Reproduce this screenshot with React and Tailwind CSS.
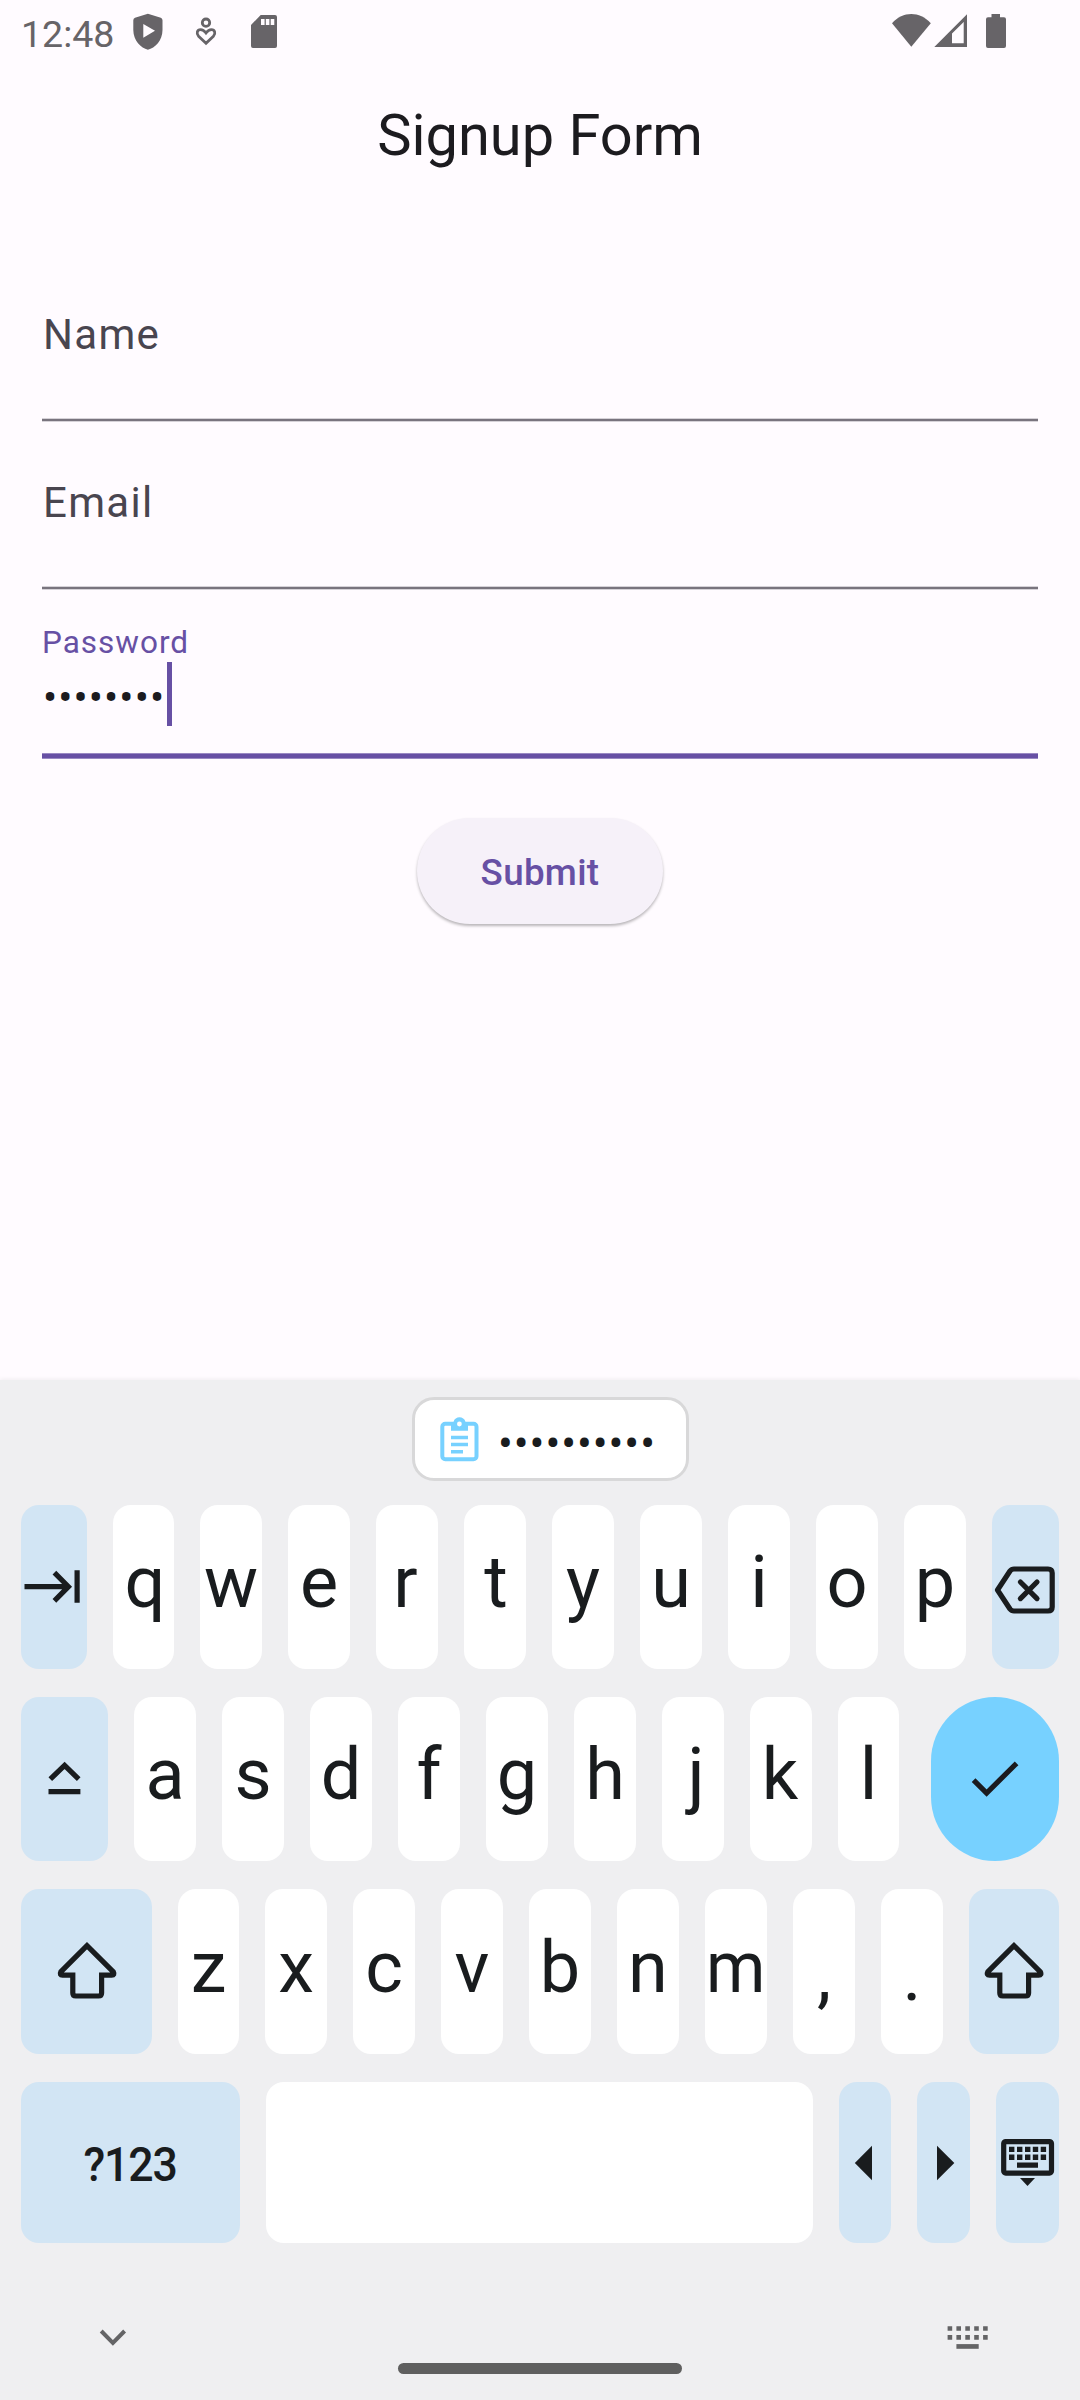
const INK = "#191c1e";

function Icon({ box, className = "", children, fill = "none", stroke = INK, sw = 5.2, ...rest }) {
  const [, , w, h] = box.split(" ").map(Number);
  return (
    <svg className={"block shrink-0 " + className} width={w} height={h} viewBox={box} fill={fill} stroke={stroke} strokeWidth={sw} {...rest}>
      {children}
    </svg>
  );
}

function StatusBar() {
  return (
    <div className="flex h-[64px] shrink-0 items-start text-[#676468]">
      <span className="ml-[21px] mt-[14px] w-[109px] text-[37.5px] leading-[40px] whitespace-nowrap">12:48</span>
      <Icon box="130 0 36 64" fill="currentColor" stroke="none">
        <path fillRule="evenodd" d="M147.9 13.7 L160.8 17.8 Q162.5 18.4 162.5 20.2 V30 C162.5 40.5 155 48 147.9 49.8 C141 48 133.3 40.5 133.3 30 V20.2 Q133.3 18.4 135 17.8 Z M143.3 24 V37.8 L155 30.8 Z" />
      </Icon>
      <Icon box="166 0 70 64" stroke="currentColor" sw={2.8}>
        <circle cx="206" cy="22.7" r="3.7" />
        <path d="M206 43.2 L198.6 36.2 C196 33.4 197.2 29.7 200.6 29.7 C203.2 29.7 204.5 31 206 33 C207.5 31 208.8 29.7 211.4 29.7 C214.8 29.7 216 33.4 213.4 36.2 Z" />
      </Icon>
      <Icon box="236 0 50 64" fill="currentColor" stroke="none">
        <path fillRule="evenodd" d="M260.7 15 H275 Q277 15 277 17 V46 Q277 48 275 48 H253 Q251 48 251 46 V25 Z M261 19 V25 H264.6 V19 Z M265.8 19 V25 H269.4 V19 Z M270.7 19 V25 H274.3 V19 Z" />
      </Icon>
      <Icon box="886 0 130 64" className="ml-auto mr-[64px]" fill="currentColor" stroke="none">
        <path d="M911.3 46.7 L892 23.2 C903 11 919.5 11 930.8 23.2 Z" />
        <path fillRule="evenodd" d="M967 14.3 V47 H934.3 Z M963.7 22 L952 33.5 V43.3 H963.7 Z" />
        <path d="M991.5 14 H1000 V17.3 H1004 Q1006 17.3 1006 19.3 V46 Q1006 48 1004 48 H988 Q986 48 986 46 V19.3 Q986 17.3 988 17.3 H991.5 Z" />
      </Icon>
    </div>
  );
}

function Field({ label }) {
  return (
    <div className="flex h-[168px] flex-col justify-end">
      <span className="mb-[58px] ml-px text-[42px] leading-[50px] tracking-[1.3px] text-[#49454f]">{label}</span>
      <div className="h-[4px] border-y border-[#d6d2d8] bg-[#79747e]" />
    </div>
  );
}

function Key({ w, blue, children }) {
  return (
    <div
      className={
        "flex h-full shrink-0 items-center justify-center rounded-[18px] text-[72px] leading-none " +
        (blue ? "bg-[#d2e5f4]" : "bg-white")
      }
      style={{ width: w }}
    >
      {children}
    </div>
  );
}

const NUDGE = {
  q: "translate-x-[1.5px]",
  r: "-translate-x-[1.5px]",
  t: "translate-x-[1px]",
  j: "translate-x-[3px]",
  k: "-translate-x-[1px]",
  m: "scale-x-[0.94]",
  ",": "translate-y-[8px]",
  ".": "translate-y-[8px]",
};

function Letters({ items, narrow }) {
  return [...items].map((c) => (
    <Key key={c} w={c === narrow ? 61 : 62}>
      <span className={"block pb-[8px] " + (NUDGE[c] || "")}>{c}</span>
    </Key>
  ));
}

function ShiftIcon() {
  return (
    <Icon box="54 1938 64 67">
      <path d="M86 1945.6 L59.8 1971.8 Q58.2 1975.1 61.5 1975.1 H71.8 V1993 Q71.8 1996 74.8 1996 H97.6 Q100.6 1996 100.6 1993 V1975.1 H110.7 Q114 1975.1 112.3 1971.8 Z" />
    </Icon>
  );
}

function Keyboard() {
  return (
    <div className="flex h-[1020px] shrink-0 flex-col bg-[#efeff1] text-[#191c1e] shadow-[0_-1px_4px_rgba(0,0,0,0.06)]">
      <div className="ml-[412px] mt-[17px] flex h-[84px] w-[277px] shrink-0 items-center rounded-[22px] border-[3px] border-[#d8d8d9] bg-white">
        <Icon box="440 1416 40 47" className="ml-[25px]" stroke="#77d1ff" sw={4}>
          <rect x="442.3" y="1423.8" width="34.2" height="35.5" rx="3" />
          <path d="M451 1422 H453.5 C455 1415.8 464 1415.8 465.5 1422 H468 V1430.8 H451 Z" fill="#77d1ff" stroke="none" />
          <circle cx="459.4" cy="1424" r="2.4" fill="#ffffff" stroke="none" />
          <path d="M451 1437.5 H468 M451 1444.5 H468 M451 1451.8 H463" strokeWidth="3.6" />
        </Icon>
        <span className="ml-[18px] translate-y-[5px] text-[44px] leading-[50px] tracking-[0.95px] whitespace-nowrap">••••••••••</span>
      </div>

      <div className="ml-[21px] mt-[24px] flex h-[164px] shrink-0 gap-[26px]">
        <Key w={66} blue>
          <Icon box="21 1560 66 54">
            <path d="M24.5 1586.7 H68 M54.4 1572.6 L68.4 1586.7 L54.4 1600.8 M77.1 1570.3 V1602.7" />
          </Icon>
        </Key>
        <Letters items="qwertyuiop" narrow="q" />
        <Key w={67} blue>
          <Icon box="992 1563 67 48" strokeLinejoin="round" className="overflow-visible">
            <path d="M997.5 1590 L1010 1571 Q1011.5 1569 1014 1569 H1048 Q1052.2 1569 1052.2 1573 V1607 Q1052.2 1611 1048 1611 H1014 Q1011.5 1611 1010 1609 Z" />
            <path d="M1020.4 1582 L1037 1598.6 M1037 1582 L1020.4 1598.6" strokeLinecap="round" />
          </Icon>
        </Key>
      </div>

      <div className="ml-[21px] mt-[28px] flex h-[164px] shrink-0 gap-[26px]">
        <Key w={87} blue>
          <Icon box="44 1755 41 48">
            <path d="M50.3 1779.2 L64.6 1765.3 L78.7 1779.2 M48.5 1791.7 H80.4" />
          </Icon>
        </Key>
        <Letters items="asdfghjkl" narrow="l" />
        <div className="ml-[6px] flex w-[128px] shrink-0 items-center justify-center rounded-[64px] bg-[#77d1ff]">
          <Icon box="965 1755 60 48" stroke="#1b1b1f">
            <path d="M973.6 1780.2 L986.6 1793 L1016.6 1763.3" />
          </Icon>
        </div>
      </div>

      <div className="ml-[21px] mt-[28px] flex h-[165px] shrink-0 gap-[26px]">
        <Key w={131} blue>
          <ShiftIcon />
        </Key>
        <Letters items="zxcvbnm,." narrow="z" />
        <Key w={90} blue>
          <ShiftIcon />
        </Key>
      </div>

      <div className="ml-[21px] mt-[28px] flex h-[161px] shrink-0 gap-[26px]">
        <Key w={219} blue>
          <span className="block translate-y-[2px] scale-x-[0.93] text-[48px] font-medium tracking-[-1.2px]">?123</span>
        </Key>
        <Key w={547} />
        <Key w={52} blue>
          <Icon box="839 2142 52 40" fill={INK} stroke="none">
            <path d="M854.8 2162 L872 2144.7 V2179.3 Z" />
          </Icon>
        </Key>
        <Key w={53} blue>
          <Icon box="917 2142 53 40" fill={INK} stroke="none">
            <path d="M954.3 2162 L937 2144.7 V2179.3 Z" />
          </Icon>
        </Key>
        <Key w={63} blue>
          <Icon box="996 2136 63 54" fill={INK} stroke="none">
            <rect x="1003.7" y="2141.6" width="47.8" height="31.5" rx="2" fill="none" stroke={INK} strokeWidth="5.2" />
            {[1009, 1017, 1025, 1032.8, 1040.7].map((x) => (
              <path key={x} d={`M${x} 2146.7 h5.4 v5.4 h-5.4 Z M${x} 2154.6 h5.4 v5.4 h-5.4 Z`} />
            ))}
            <path d="M1017 2162.4 H1038 V2167.7 H1017 Z M1020 2178 H1035 L1027.5 2186 Z" />
          </Icon>
        </Key>
      </div>

      <div className="mx-auto mt-auto flex h-[80px] w-full items-start">
        <Icon box="95 2320 36 36" className="ml-[95px]" stroke="#646466" sw={4}>
          <path d="M101.2 2331 L112.9 2342.8 L124.6 2331" />
        </Icon>
        <div className="ml-[267px] mt-[43px] h-[11px] w-[284px] rounded-full bg-[#5f5f5f]" />
        <Icon box="940 2320 56 36" className="ml-[258px]" fill="#646466" stroke="none">
          {[947.6, 956.4, 965.3, 974.2, 983.1].map((x) => (
            <path key={x} d={`M${x} 2326.2 h4.6 v4.6 h-4.6 Z M${x} 2335.1 h4.6 v4.6 h-4.6 Z`} />
          ))}
          <path d="M956.4 2344.1 H978.7 V2348.8 H956.4 Z" />
        </Icon>
      </div>
    </div>
  );
}

export default function App() {
  return (
    <div className="flex h-[2400px] w-[1080px] flex-col overflow-hidden bg-[#fffbff] font-[Roboto,sans-serif]">
      <StatusBar />
      <h1 className="mt-[37px] text-center text-[57.75px] leading-[68px] text-[#1c1b1f]">Signup Form</h1>
      <div className="mx-[42px] mt-[85px] flex shrink-0 flex-col">
        <Field label="Name" />
        <Field label="Email" />
        <div className="flex h-[169px] flex-col">
          <span className="mt-[34px] text-[31.5px] leading-[38px] tracking-[1px] text-[#6750a4]">Password</span>
          <div className="flex h-[64px] items-center">
            <span className="ml-px w-[124px] translate-y-[4px] text-[42px] leading-[50px] tracking-[1.1px] whitespace-nowrap text-[#1c1b1f]">••••••••</span>
            <div className="h-[64px] w-[5px] bg-[#6750a4]" />
          </div>
          <div className="mt-auto h-[6px] border-y border-[#9a89c3] bg-[#6750a4]" />
        </div>
      </div>
      <button className="mx-auto mt-[59px] flex h-[106px] w-[246px] shrink-0 items-center justify-center rounded-[53px] bg-[#f6f1f9] pt-[3px] text-[36.75px] font-medium tracking-[0.3px] text-[#6750a4] shadow-[0_2px_3px_rgba(0,0,0,0.28)]">
        Submit
      </button>
      <div className="mt-auto">
        <Keyboard />
      </div>
    </div>
  );
}
